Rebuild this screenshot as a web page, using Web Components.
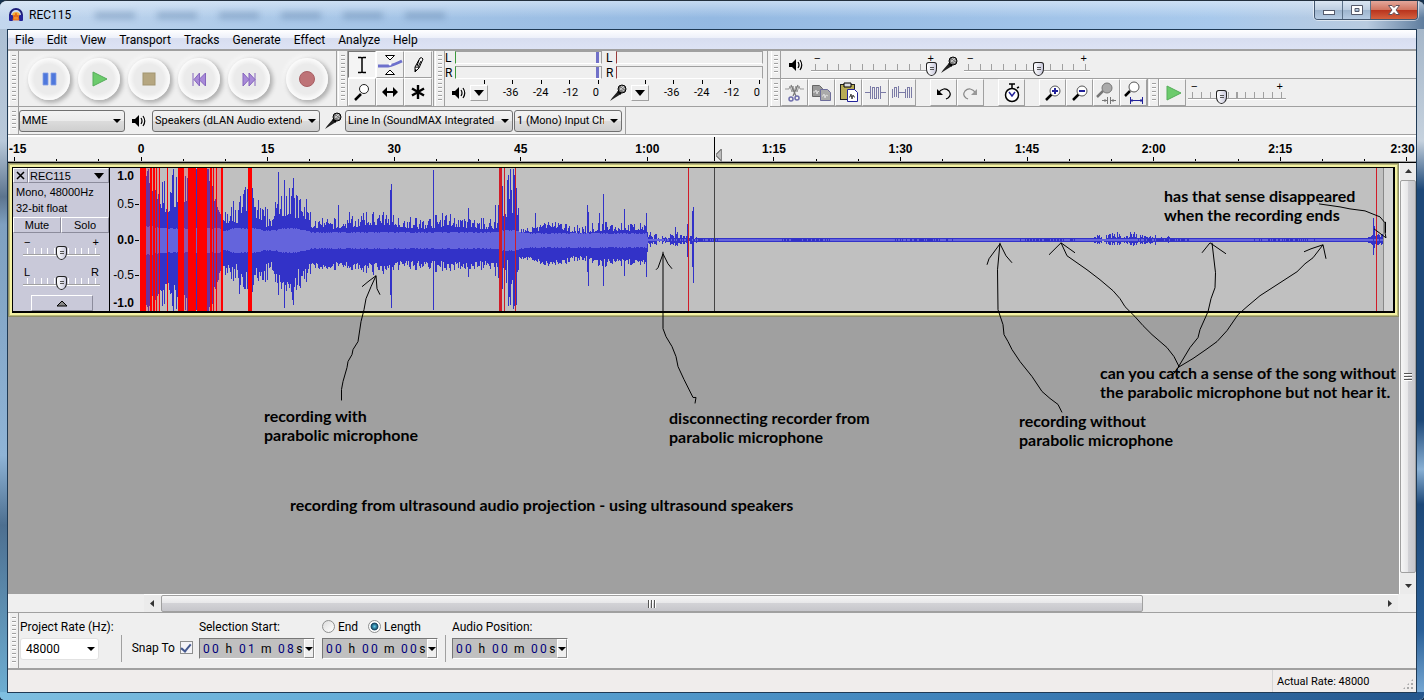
<!DOCTYPE html>
<html lang="en">
<head>
<meta charset="utf-8">
<title>REC115</title>
<style>
  html, body { margin: 0; height: 100%; }
  body { background: #16324f; font: 12px/16px Roboto, "Open Sans", sans-serif; color: #000; overflow: hidden; }
</style>
</head>
<body>
<app-window></app-window>

<script>
// every element renders its own markup into an open shadow root
class UiElement extends HTMLElement {
  connectedCallback() {
    if (this.shadowRoot) return;
    this.attachShadow({ mode: 'open' });
    this.shadowRoot.innerHTML = `<style>*{box-sizing:border-box}:host{box-sizing:border-box}</style>` + this.render();
  }
  attr(name, fallback = '') { return this.getAttribute(name) ?? fallback; }
}

const MIC = `<path d="M1 17L3 14 9 7 12 10 4 15Z" fill="#222"/><path d="M9 7L12 10" stroke="#000" stroke-width="2"/><circle cx="13" cy="5" r="4" fill="#777" stroke="#000"/><path d="M11 4l4 3M12 2l4 3M11 6l4-4" stroke="#ddd" stroke-width=".8"/>`;
const ICONS = {
  pause: [18, 18, `<path d="M3 3h5v12H3zM11 3h5v12h-5z" fill="#4f78dc" stroke="#86a0e4" stroke-width=".8"/>`],
  play: [18, 18, `<path d="M3 2L17 9 3 16Z" fill="#6ccb6c" stroke="#55ad5a"/>`],
  stop: [18, 18, `<rect x="3" y="3" width="12" height="12" fill="#b5a680" stroke="#a29570"/>`],
  start: [18, 18, `<path d="M3 3v13M9.500 3v13L4 9.500ZM15.500 3v13L9 9.500Z" fill="#a88ad8" stroke="#8565bd"/>`],
  end: [18, 18, `<path d="M15 3v13M3 3v13L9 9.500ZM9 3v13L15 9.500Z" fill="#a88ad8" stroke="#8565bd"/>`],
  record: [18, 18, `<circle cx="9" cy="9" r="7.500" fill="#be7377" stroke="#a75e63"/>`],
  ibeam: [20, 20, `<path d="M6 2.500h3q1 0 1 1 0-1 1-1h3M10 3v14M6 17.500h3q1 0 1-1 0 1 1 1h3" fill="none" stroke="#000" stroke-width="1.500"/>`],
  envelope: [26, 26, `<path d="M1 14h10q6-1 14-5" fill="none" stroke="#6d70cc" stroke-width="3"/><path d="M8.500 3.500h9L13 8ZM8.500 22.500h9L13 18Z" fill="#fff" stroke="#000"/><circle cx="13" cy="12" r="1.500" fill="#fff"/>`],
  pencil: [20, 20, `<path d="M7 17l0-5 5-9q2-1 3 1l-4 9ZM7 12q3 0 4 1M11 5l-2 6M13 6l-3 6" fill="#fff" stroke="#000"/><path d="M7 17v-3l2 1z"/>`],
  zoom: [20, 20, `<path d="M3 18l6-6" stroke="#000" stroke-width="2.500"/><circle cx="12" cy="7" r="4.500" fill="#fff" stroke="#222"/>`],
  shift: [20, 20, `<path d="M3 10h14" stroke="#000" stroke-width="2"/><path d="M7 5L2 10l5 5zM13 5l5 5-5 5z"/>`],
  multi: [20, 20, `<path d="M10 3v14M4 6.500l12 7M4 13.500l12-7" stroke="#000" stroke-width="2.400"/>`],
  speaker: [16, 16, `<path d="M1 6h3l4-4v12l-4-4H1z"/><path d="M10 5q2 3 0 6M12 3q3.500 5 0 10" fill="none" stroke="#000" stroke-width="1.200"/>`],
  mic: [18, 18, MIC],
  cut: [23, 23, `<path d="M2 8h4l1-3 2 6 1-6 1 6 2-6 1 6 2-6 1 3h4" fill="none" stroke="#999"/><path d="M8 4l5 11M15 4L10 15" stroke="#777" stroke-width="1.200"/><circle cx="8" cy="18" r="2" fill="none" stroke="#6d6dab" stroke-width="1.500"/><circle cx="14" cy="17" r="2" fill="none" stroke="#6d6dab" stroke-width="1.500"/>`],
  copy: [23, 23, `<path d="M2.500 4.500h7l3 3v8h-10z" fill="#999" stroke="#666"/><path d="M10.500 8.500h7l3 3v8h-10z" fill="#aaa" stroke="#6d6d9b"/><path d="M3 11h2l1-2 1 4 1-3 1 1M12 15h1l1-2 1 4 1-3 2 1" fill="none" stroke="#ddd"/>`],
  paste: [23, 23, `<rect x="3.500" y="3.500" width="14" height="15" fill="#b8ac55" stroke="#222"/><path d="M7 2h7v4H7z" fill="#ddd" stroke="#000"/><path d="M10.500 8.500h7l3 3v9h-10z" fill="#fff" stroke="#22229a"/><path d="M12 16h1l1-3 1 5 1-4 1 2h1" fill="none" stroke="#444"/>`],
  trim: [23, 23, `<path d="M1 11.500h5M6.500 5v13M8.500 18V6M10.500 6v12M12.500 18V6M14.500 6v12M16.500 5v13M17 11.500h5M8 6.500h3M10 17.500h3M12 6.500h3" fill="none" stroke="#7b7ba6"/>`],
  silence: [23, 23, `<path d="M1.500 17V8M3.500 6v10M5.500 16V6M7.500 5v12M8 11.500h6M14.500 17V8M16.500 6v11M18.500 17V6M20.500 6v11M3 6.500h3M16 6.500h3" fill="none" stroke="#7b7ba6"/>`],
  undo: [21, 21, `<path d="M5 11q6-7 11-2 3 4-1 7l-2 1" fill="none" stroke="#000" stroke-width="1.200"/><path d="M4 7v6h6z"/>`],
  redo: [21, 21, `<path d="M16 11q-6-7-11-2-3 4 1 7l2 1" fill="none" stroke="#888" stroke-width="1.200"/><path d="M17 7v6h-6z" fill="#999"/>`],
  timer: [20, 22, `<circle cx="10" cy="13" r="6.500" fill="#fff" stroke="#000" stroke-width="1.500"/><path d="M10 6V2M7 2h6M15 6l2-1" stroke="#000" stroke-width="1.500"/><path d="M7 10l3 4 3-4" fill="none" stroke="#22229a" stroke-width="1.500"/>`],
  zoomin: [20, 20, `<path d="M3 17l6-6" stroke="#000" stroke-width="2.500"/><circle cx="12" cy="8" r="5" fill="#fff" stroke="#555"/><path d="M12 5v6M9 8h6" stroke="#22229a" stroke-width="2"/>`],
  zoomout: [20, 20, `<path d="M3 17l6-6" stroke="#000" stroke-width="2.500"/><circle cx="12" cy="8" r="5" fill="#fff" stroke="#555"/><path d="M9 8h6" stroke="#22229a" stroke-width="2"/>`],
  fitsel: [23, 23, `<path d="M2 16l6-6" stroke="#777" stroke-width="2.500"/><circle cx="12" cy="7" r="5" fill="#aaa" stroke="#777"/><path d="M7 19.500h5M16 19.500h5M12.500 16v7M15.500 16v7M10 18v3M18 18v3" stroke="#777"/>`],
  fitproj: [23, 23, `<path d="M3 15l5-5" stroke="#000" stroke-width="2.500"/><circle cx="12" cy="6" r="5" fill="#fff" stroke="#555"/><path d="M8 19.500h12M8.500 16v7M20.500 16v7M10 18v3M19 18v3" stroke="#22229a"/>`],
  audacity: [16, 16, `<path d="M2 11V8a6 6 0 0 1 12 0v3" fill="none" stroke="#1d1d7a" stroke-width="2"/><path d="M4 13V9a4 4 0 0 1 8 0v4z" fill="#f7b23a"/><rect x="1" y="8" width="4" height="6" rx="1" fill="#24249a"/><rect x="11" y="8" width="4" height="6" rx="1" fill="#24249a"/><path d="M5 13l1-5 1 2 1-4 1 4 1-2 1 5z" fill="#f3902a" stroke="#e05a1a" stroke-width=".8"/>`],
  down: [12, 12, `<path d="M1 3h10L6 9z"/>`],
  smalldown: [8, 8, `<path d="M0 2h8L4 6z"/>`],
  up: [12, 12, `<path d="M1 9h10L6 4z" fill="#888" stroke="#000"/>`],
};

class UiIcon extends UiElement {
  render() {
    const [w, h, art] = ICONS[this.attr('name')];
    return `<style>:host{display:block;flex:none;line-height:0}</style>
      <svg width="${w}" height="${h}" viewBox="0 0 ${w} ${h}" aria-hidden="true">${art}</svg>`;
  }
}
customElements.define('ui-icon', UiIcon);

// dockable bar: a grip on the left and slotted controls
class ToolBar extends UiElement {
  render() {
    return `<style>
      :host{display:flex;border-right:1px solid #a0a0a0;border-bottom:1px solid #a0a0a0;background:#efefef}
      .grip{flex:none;width:10px;margin-left:1px;border-left:1px solid #fff;border-right:1px solid #a0a0a0;padding:4px 2px}
      .grip i{display:block;height:100%;background:repeating-linear-gradient(#a0a0a0 0 1px,#fff 1px 2px,#efefef 2px 4px)}
      .body{display:flex;align-items:center;flex:1;min-width:0}
    </style><div class="grip"><i></i></div><div class="body"><slot></slot></div>`;
  }
}
customElements.define('tool-bar', ToolBar);

class RoundButton extends UiElement {
  render() {
    return `<style>
      :host{display:block}
      button{display:grid;place-items:center;width:42px;height:42px;padding:0;border:0;border-radius:50%;
        background:radial-gradient(circle,#ebebeb 50%,#fafafa 68%);
        box-shadow:2px 2px 4px 1px #b0b0b0,-2px -2px 4px #fafafa}
    </style><button aria-label="${this.attr('icon')}"><ui-icon name="${this.attr('icon')}"></ui-icon></button>`;
  }
}
customElements.define('round-button', RoundButton);

class ToolButton extends UiElement {
  render() {
    return `<style>
      :host{display:block;width:27px;height:27px}
      button{display:grid;place-items:center;width:100%;height:100%;padding:0;background:#efefef;
        border:1px solid;border-color:#fff #a0a0a0 #a0a0a0 #fff;overflow:hidden}
      :host([pressed]) button{border-color:#777 #fff #fff #777;background:#f4f4f4}
    </style><button aria-label="${this.attr('icon')}"><ui-icon name="${this.attr('icon')}"></ui-icon></button>`;
  }
}
customElements.define('tool-button', ToolButton);

class TickSlider extends UiElement {
  render() {
    return `<style>
      :host{display:block;--tick:#a0a0a0}
      .ends{display:flex;justify-content:space-between;height:8px;padding:0 3px;font:11px/8px "Liberation Sans",sans-serif}
      :host([tall]) .ends{padding:0 1px}
      .scale{height:6px;margin:0 4px;border-right:1px solid var(--tick);
        background:repeating-linear-gradient(to right,var(--tick) 0 1px,transparent 1px 10%)}
      .rail{height:2px;background:#a0a0a0;border-bottom:1px solid #fff}
      .track{display:grid}
      .track > *{grid-area:1/1}
      .track > div{padding-top:2px}
      input{appearance:none;width:100%;height:14px;margin:0;background:none}
      input::-webkit-slider-thumb{appearance:none;width:11px;height:14px;border:1px solid #222;
        border-radius:3px 3px 6px 6px/3px 3px 8px 8px;
        background:linear-gradient(#555,#555) 3px 4px/4px 1px no-repeat,linear-gradient(#555,#555) 3px 6px/4px 1px no-repeat,
        linear-gradient(90deg,#fff,#c9c9dc)}
      :host([light]){--tick:#fff}
    </style>
    <div class="ends"><span>${this.attr('lo', '−')}</span><span>${this.attr('hi', '+')}</span></div>
    <div class="track"><div><div class="scale"></div><div class="rail"></div></div>
    <input type="range" min="0" max="100" value="${this.attr('value')}" aria-label="${this.attr('label')}"></div>`;
  }
}
customElements.define('tick-slider', TickSlider);

class DropDown extends UiElement {
  render() {
    return `<style>
      :host{display:grid;height:22px;align-items:center;font-size:11px}
      select,ui-icon{grid-area:1/1}
      select{appearance:none;width:100%;height:100%;padding:0 17px 0 2px;border:1px solid #707070;border-radius:3px;
        font:inherit;color:#000;background:linear-gradient(#f3f3f3,#ebebeb 50%,#dcdcdc 50%,#cfcfcf)}
      :host([plain]){font-size:12px}
      :host([plain]) select{border-color:#e2e2e2;background:#fff;padding-left:5px}
      ui-icon{justify-self:end;margin-right:4px;pointer-events:none}
    </style>
    <select aria-label="${this.attr('label')}"><option>${this.attr('value')}</option></select>
    <ui-icon name="smalldown"></ui-icon>`;
  }
}
customElements.define('drop-down', DropDown);

class DbMeter extends UiElement {
  render() {
    const bar = `<div class="bar"><i></i></div>`;
    return `<style>
      :host{display:block;align-self:flex-start;width:161px;font:12px/14px Roboto,sans-serif}
      .rows{display:grid;grid-template-columns:10px 1fr;row-gap:1px;padding-right:4px}
      .bar{height:13px;border-top:1px solid #a0a0a0;border-bottom:1px solid #fff;border-left:1px solid var(--edge);border-right:1px solid #a0a0a0;padding-right:2px}
      .bar i{display:block;height:100%;border-right:3px solid var(--peak,transparent)}
      .ticks{display:flex;padding:0 7px 0 11px}
      .ticks i{flex:1;height:4px;border-right:1px solid #000}
      .low{display:flex;align-items:center;padding:0 7px 0 6px;height:18px}
      button{display:grid;place-items:center;width:18px;height:16px;margin:0 15px 0 3px;padding:0;background:#efefef;border:1px solid;border-color:#fff #a0a0a0 #a0a0a0 #fff}
      .db{display:flex;flex:1;justify-content:space-between;font-size:11px}
      :host([kind=mic]) .low{padding-left:3px}
      :host([kind=mic]) button{margin-left:4px}
    </style>
    <div class="rows"><span>L</span>${bar}<span>R</span>${bar}</div>
    <div class="ticks"><i></i><i></i><i></i><i></i><i></i></div>
    <div class="low"><ui-icon name="${this.attr('kind')}"></ui-icon>
      <button aria-label="Meter options"><ui-icon name="down"></ui-icon></button>
      <div class="db"><span>-36</span><span>-24</span><span>-12</span><span>0</span></div></div>`;
  }
}
customElements.define('db-meter', DbMeter);

class TimeField extends UiElement {
  render() {
    const digits = (s) => [...s].map((d) => `<b>${d}</b>`).join('');
    const [h, m, s] = this.attr('value').split(':');
    return `<style>
      :host{display:flex;width:116px;height:21px;background:#c0c0c0;border:1px solid;border-color:#777 #fff #fff #777;padding-left:2px;align-items:center}
      .t{display:flex;flex:1}
      b{width:9px;text-align:center;font-weight:400;color:#00007c}
      u{text-decoration:none;text-align:center;width:18px}
      u.m{width:21px}
      u.s{width:9px}
      button{width:10px;height:19px;padding:0;background:#efefef;border:1px solid;border-color:#fff #888 #888 #fff;display:grid;place-items:center}
    </style>
    <div class="t" role="group" aria-label="${this.attr('label')}">${digits(h)}<u>h</u>${digits(m)}<u class="m">m</u>${digits(s)}<u class="s">s</u></div>
    <button aria-label="Format"><ui-icon name="smalldown"></ui-icon></button>`;
  }
}
customElements.define('time-field', TimeField);

class TitleBar extends UiElement {
  render() {
    return `<style>
      :host{display:flex;height:28px;align-items:center;padding-left:8px;
        background:linear-gradient(#e6f0fb99,#ffffff00 60%),linear-gradient(90deg,#c3d7ee,#aac8e8 20%,#94b9e2 50%,#a8c9ec 85%,#b9cbe0 96%,#5f7d9e)}
      h1{font:12px/16px Roboto,sans-serif;margin:0 0 0 5px}
      .ghost{display:flex;gap:22px;margin-left:24px;filter:blur(3px)}
      .ghost i{width:40px;height:7px;background:#5d7fa66b}
      .controls{display:flex;align-self:flex-start;margin-left:auto;margin-right:6px;border:1px solid #42566e;border-top:0;border-radius:0 0 4px 4px;overflow:hidden;box-shadow:0 0 0 1px #ffffff88}
      button{display:grid;place-items:center;width:28px;height:18px;padding:0;border:0;border-right:1px solid #5c7188;background:linear-gradient(#dbe6f2,#bccde0 50%,#9db4cd 50%,#b6cbe2)}
      button.x{width:46px;border-right:0;background:linear-gradient(#e3a79b,#d0745f 50%,#b8321c 50%,#d4613f)}
    </style>
    <ui-icon name="audacity"></ui-icon><h1>REC115</h1>
    <div class="ghost"><i></i><i></i><i></i><i></i><i></i><i></i></div>
    <div class="controls">
      <button aria-label="Minimize"><svg width="14" height="12"><rect x="1.500" y="6.500" width="11" height="4" fill="#fff" stroke="#555a6b"/></svg></button>
      <button aria-label="Maximize"><svg width="14" height="12"><path d="M1.500 1.500h11v9h-11zM5 4.500v3h4v-3z" fill="#fff" fill-rule="evenodd" stroke="#555a6b"/></svg></button>
      <button class="x" aria-label="Close"><svg width="14" height="12"><path d="M1.500 1.500h3.500l2 2 2-2h3.500L9 6l3.500 4.500H9l-2-2-2 2H1.500L5 6z" fill="#fff" stroke="#60505a"/></svg></button>
    </div>`;
  }
}
customElements.define('title-bar', TitleBar);

class MenuBar extends UiElement {
  render() {
    const items = ['File', 'Edit', 'View', 'Transport', 'Tracks', 'Generate', 'Effect', 'Analyze', 'Help'];
    return `<style>
      :host{display:flex;gap:13px;height:20px;align-items:center;padding-left:7px;border-bottom:1px solid #a0a0a0;
        background:linear-gradient(#fff,#eef1fa 40%,#d8def0 45%,#dde3f4)}
      button{all:unset;font:12px/16px Roboto,"Open Sans",sans-serif}
    </style>${items.map((t) => `<button>${t}</button>`).join('')}`;
  }
}
customElements.define('menu-bar', MenuBar);

class TimeRuler extends UiElement {
  render() {
    // 15 s is 8.99% of the width, zero sits at 9.45%
    const at = (sec) => (9.45 + sec / 15 * 8.99).toFixed(3) + '%';
    const names = ['-15', '0', '15', '30', '45', '1:00', '1:15', '1:30', '1:45', '2:00', '2:15', '2:30'];
    let out = '';
    names.forEach((n, i) => {
      const sec = (i - 1) * 15;
      const first = i === 0, last = i === names.length - 1;
      out += `<text x="${first ? 1 : last ? '99.900%' : at(sec)}" y="16" text-anchor="${first ? 'start' : last ? 'end' : 'middle'}">${n}</text>`;
      out += `<line x1="${at(sec)}" x2="${at(sec)}" y1="20" y2="24"/>`;
      if (!last) for (const m of [5, 10]) out += `<line x1="${at(sec + m)}" x2="${at(sec + m)}" y1="22" y2="24"/>`;
    });
    return `<style>
      :host{display:block;height:28px;background:#efefef;border-top:2px solid #fff;border-bottom:1px solid #000;box-shadow:inset 0 -1px #a0a0a0}
      svg{display:block;width:100%;height:25px;shape-rendering:crispEdges}
      text{font:bold 12px "Liberation Sans",sans-serif}
      line{stroke:#000}
    </style><svg>${out}<line x1="50.200%" x2="50.200%" y1="0" y2="24"/>
      <svg x="50.200%" y="12" width="8" height="13"><path d="M6.500 0v12L1 6z" fill="#bbb" stroke="#888"/></svg></svg>`;
  }
}
customElements.define('time-ruler', TimeRuler);

class TrackPanel extends UiElement {
  render() {
    return `<style>
      :host{display:flex;flex-direction:column;width:97px;background:#c9c9d9;border-right:1px solid #000;font:11px/16px "Liberation Sans",sans-serif}
      .row{display:flex}
      button{display:flex;align-items:center;justify-content:center;height:15px;padding:0;font:inherit;background:#c9c9d9;border:1px solid;border-color:#fff #8c8c9c #8c8c9c #fff}
      .x{width:15px}
      .name{flex:1;justify-content:space-between;padding:0 3px 0 1px}
      .info{padding:1px 3px}
      .half{flex:1;height:16px}
      .sliders{display:flex;flex-direction:column;gap:8px;padding:5px 9px 5px 10px}
      .fold{width:62px;height:17px;margin:0 0 0 18px}
    </style>
    <div class="row"><button class="x" aria-label="Close track"><svg width="9" height="9"><path d="M1 1l7 7M8 1L1 8" stroke="#000" stroke-width="1.500"/></svg></button>
      <button class="name"><span>REC115</span><ui-icon name="down"></ui-icon></button></div>
    <div class="info">Mono, 48000Hz<br>32-bit float</div>
    <div class="row"><button class="half">Mute</button><button class="half">Solo</button></div>
    <div class="sliders">
      <tick-slider tall light value="50" label="Gain"></tick-slider>
      <tick-slider tall light value="50" lo="L" hi="R" label="Pan"></tick-slider>
    </div>
    <button class="fold" aria-label="Collapse"><ui-icon name="up"></ui-icon></button>`;
  }
}
customElements.define('track-panel', TrackPanel);

class WaveForm extends UiElement {
  render() {
    return `<style>
      :host{display:block;flex:1;min-width:0;background:#c0c0c0}
      svg{display:block;width:100%;height:100%;shape-rendering:crispEdges}
    </style><svg viewBox="140 168 1253 143" preserveAspectRatio="none">${this.wave()}</svg>`;
  }
  wave() {
    // x, height above the axis, height below the axis, jitter, rms
    const env = [
      [140, 60, 60, 14, 14], [156, 46, 58, 30, 13], [164, 32, 46, 24, 12], [178, 46, 58, 34, 12], [210, 52, 60, 24, 12],
      [219, 32, 38, 16, 12], [225, 17, 26, 10, 9], [235, 20, 28, 18, 12], [244, 30, 38, 22, 12], [254, 28, 34, 20, 12],
      [263, 16, 28, 14, 10], [276, 20, 28, 16, 10], [279, 34, 46, 30, 12], [290, 32, 44, 30, 12], [300, 25, 34, 18, 11],
      [309, 24, 28, 14, 9], [311, 14, 25, 6, 8], [340, 13, 24, 7, 8], [375, 18, 26, 9, 8], [420, 13, 23, 8, 8], [450, 17, 25, 9, 8],
      [460, 14, 24, 6, 8], [497, 13, 23, 8, 8], [501, 36, 44, 44, 10], [515, 36, 46, 40, 10], [519, 9, 18, 4, 8],
      [532, 8, 17, 4, 7], [545, 14, 23, 5, 7], [580, 8, 17, 5, 7], [600, 11, 21, 6, 7], [646, 11, 21, 5, 7],
      [648, 2, 2, 3, 1], [668, 2, 2, 3, 1], [676, 3, 3, 4, 2], [694, 2, 2, 2, 1], [698, 2, 2, 0, 1],
      [1088, 2, 2, 0, 1], [1100, 2, 2, 3, 1], [1135, 3, 3, 3, 2], [1160, 2, 2, 1, 1], [1180, 2, 2, 0, 1], [1366, 2, 2, 0, 1],
      [1374, 5, 5, 3, 2], [1383, 3, 3, 3, 1],
    ];
    const spikes = {
      167: [72, 70], 172: [65, 66], 196: [72, 70], 208: [71, 71], 278: [68, 55], 284: [60, 68], 289: [52, 48], 239: [38, 54], 338: [35, 26],
      349: [28, 28], 373: [28, 35], 390: [50, 55], 391: [56, 68], 433: [70, 70], 468: [32, 37], 495: [35, 36], 498: [35, 38],
      507: [60, 20], 508: [65, 66], 511: [50, 44], 516: [52, 65], 518: [32, 30], 535: [27, 20], 587: [35, 32], 588: [28, 46],
      603: [46, 46], 599: [27, 25], 624: [31, 36], 646: [27, 37], 650: [8, 7], 656: [6, 5], 675: [13, 6], 677: [8, 6],
      687: [16, 17], 692: [29, 27], 693: [33, 43], 1112: [7, 5], 1117: [8, 5], 1130: [8, 5], 1134: [8, 5], 1155: [5, 5],
      1168: [4, 3], 1373: [22, 15], 1374: [14, 8],
    };
    const axis = 240;
    let seed = 7, k = 0, outer = '', inner = '';
    const rnd = () => (seed = (seed * 16807) % 2147483647) / 2147483647;
    for (let x = 140; x < 1383; x++) {
      while (k < env.length - 2 && x >= env[k + 1][0]) k++;
      const a = env[k], b = env[k + 1], t = (x - a[0]) / (b[0] - a[0]);
      const mix = (i) => a[i] + (b[i] - a[i]) * t;
      // squared noise keeps most columns low with an occasional peak
      const n = rnd(), j = mix(3) * (n * n * 1.6 - .3);
      let up = mix(1) + j, dn = mix(2) + j * .7 + (rnd() - .5) * mix(3) * .4;
      if (spikes[x]) [up, dn] = spikes[x];
      up = Math.max(1, Math.min(71, Math.round(up)));
      dn = Math.max(1, Math.min(71, Math.round(dn)));
      outer += `M${x}.500 ${axis - up}V${axis + dn}`;
      const r = Math.round(mix(4) + (mix(4) > 5 ? rnd() * 1.500 : 0));
      if (mix(4) > 3) inner += `M${x}.500 ${axis - r + 1}V${axis + r}`;
      else if (Math.sin(x / 19) + rnd() * 1.400 > .1) inner += `M${x}.500 ${axis - 1}V${axis + 1}`;
    }
    const clips = [[140, 6], [150, 2], [153, 2], [156, 1], [159, 1], [167, 1], [178, 6], [188, 8], [197, 10], [210, 2], [213, 1],
      [216, 1], [221, 2], [248, 4]];
    const dark = [[499, 3], [504, 1], [515, 1], [688, 1], [1376, 1]];
    return `<path d="M1384 168h9v143h-9z" fill="#d6d6d6"/>
      <path d="${outer}" stroke="#3232c8"/><path d="${inner}" stroke="#6464dc"/>
      <path d="M146 168h14v143h-14zM206 168h16v143h-16zM184 168h4v143h-4z" fill="#f33" opacity=".28"/>
      ${clips.map(([x, w]) => `<rect x="${x}" y="168" width="${w}" height="143" fill="#f00"/>`).join('')}
      ${dark.map(([x, w]) => `<rect x="${x}" y="168" width="${w}" height="143" fill="#d01c28"/>`).join('')}
      <path d="M714.500 168v143" stroke="#444"/><path d="M1383.500 168v143" stroke="#888"/>`;
  }
}
customElements.define('wave-form', WaveForm);

class AudioTrack extends UiElement {
  render() {
    return `<style>
      :host{display:flex;height:146px;margin:4px 4px 0 4px;border:1px solid #000;border-width:1px 2px 2px 1px;box-shadow:0 0 0 2px #f4f2a4,0 0 0 3px #b9b878,0 0 0 4px #8e8d68}
      .levels{display:flex;flex-direction:column;align-items:flex-end;width:30px;padding:1px 6px 0 0;background:#cdcddc;font:12px/14px "Liberation Sans",sans-serif}
      .levels span{position:relative}
      .levels span::after{content:"";position:absolute;left:100%;top:7px;width:4px;height:1px;margin-left:1px;background:#000}
      .near{margin:14px 0 22px}
      .far{margin:21px 0 14px}
    </style>
    <track-panel></track-panel>
    <div class="levels"><b>1.0</b><span class="near">0.5</span><span><b>0.0</b></span><span class="far">-0.5</span><b>-1.0</b></div>
    <wave-form></wave-form>`;
  }
}
customElements.define('audio-track', AudioTrack);

// hand-drawn arrows and captions that float over the track canvas
class HandNotes extends UiElement {
  render() {
    return `<style>
      :host{position:absolute;inset:0;pointer-events:none;font:bold 16px/19px Lato,"Open Sans",sans-serif;font-variant-ligatures:none}
      svg{position:absolute;width:100%;height:100%}
      path{fill:none;stroke:#000;stroke-width:1;vector-effect:non-scaling-stroke}
      p{position:absolute;margin:0;white-space:nowrap}
    </style>
    <svg viewBox="8 163 1391 432" preserveAspectRatio="none">
      <path d="M341.500 401V390L343 382 347 368 348 362 352 355 353 350 358 342 361 322 364 310 366 299 371 287 376 276M362 287L368 282 376 276 377 289 380 295"/>
      <path d="M695 404L696 398 693 398 684 380 678 367 676 357 672 347 666 337 663 329V252M656 270L658 268 663 254 668 264 672 269"/>
      <path d="M1062 413L1058 405 1050 399 1042 392 1032 377 1020 362 1012 350 1008 342 1004 335 1003 325 998 310 997.500 270 1000 243M987 265L989 259 1000 244 1006 256 1012 263"/>
      <path d="M1173 375L1179 367 1174 357 1167 348 1152 335 1143 326 1135 317 1125 307 1120 299 1113 291 1100 280 1087 270 1067 256 1061 243M1049 255L1061 243 1075 253"/>
      <path d="M1178 368L1190 348 1198 338 1200 330 1208 312 1211 299 1215 288 1215.500 273 1212 243M1202 253L1210 243 1226 254"/>
      <path d="M1178 368L1193 359 1206 350 1217 342 1227 331 1238 315 1247 307 1260 296 1277 285 1297 272 1305 264 1313 258 1323 245M1304 252L1311 249 1323 245 1326 259M1173 372L1180 373"/>
      <path d="M1319 204L1340 207 1350 209 1365 211 1380 217 1385 223V233L1386 238 1374 229M1385.500 222V233"/>
    </svg>
    <p style="left:256px;top:243px">recording with<br>parabolic microphone</p>
    <p style="left:661px;top:245px">disconnecting recorder from<br>parabolic microphone</p>
    <p style="left:1011px;top:248px">recording without<br>parabolic microphone</p>
    <p style="left:1092px;top:200px">can you catch a sense of the song without<br>the parabolic microphone but not hear it.</p>
    <p style="left:1156px;top:23px">has that sense disappeared<br>when the recording ends</p>
    <p style="left:282px;top:332px">recording from ultrasound audio projection - using ultrasound speakers</p>`;
  }
}
customElements.define('hand-notes', HandNotes);

class ScrollBar extends UiElement {
  render() {
    const v = this.hasAttribute('vertical');
    return `<style>
      :host{display:flex;flex-direction:${v ? 'column' : 'row'};background:#ebebeb;border:solid #fff;border-width:${v ? '0 0 0 1px' : '1px 0 0'}}
      svg{flex:none}
      .thumb{flex:${this.attr('size')};display:grid;place-items:center;border:1px solid #a0a0a0;border-radius:2px;background:linear-gradient(${v ? '90deg' : '180deg'},#f6f6f6,#e6e6e8 50%,#d2d2d6 50%,#c6c6cb)}
      .thumb i{width:8px;height:8px;background:repeating-linear-gradient(${v ? '180deg' : '90deg'},#555 0 1px,#fff 1px 2px,transparent 2px 3px)}
      .rest{flex:${this.attr('rest')}}
    </style>
    <svg width="17" height="17"><path d="${v ? 'M5 10h7L8.500 6z' : 'M10 5v7L6 8.500z'}" fill="#333"/></svg>
    <div class="thumb"><i></i></div><div class="rest"></div>
    <svg width="17" height="17"><path d="${v ? 'M5 7h7L8.500 11z' : 'M7 5v7l4-3.500z'}" fill="#333"/></svg>`;
  }
}
customElements.define('scroll-bar', ScrollBar);

class SelectionBar extends UiElement {
  render() {
    return `<style>
      :host{display:block;border-top:1px solid #a0a0a0;font:12px/16px Roboto,sans-serif}
      tool-bar{height:57px;border-right:0;border-bottom:2px solid #a0a0a0}
      .col{display:flex;flex-direction:column;gap:3px;align-self:flex-start;padding-top:5px}
      .rate{padding:5px 15px 0 1px}
      .length{margin-left:7px}
      .line{display:flex;align-items:center;height:17px}
      hr{width:1px;height:27px;margin:22px 6px 0 7px;border:0;background:#a0a0a0;align-self:flex-start}
      .rate + hr{margin-left:-8px}
      .snap{display:flex;align-items:center;align-self:flex-start;margin:26px 6px 0 4px;height:17px}
      input{width:13px;height:13px;margin:0 3px 0 0;appearance:none;border:1px solid #8e8f8f;background:linear-gradient(135deg,#ddd,#fff)}
      .snap input{margin:0 0 0 5px;background:#f4f4f8;display:grid;place-items:center}
      .snap input:checked::before{content:"";width:4px;height:8px;margin-top:-2px;border:solid #43588f;border-width:0 2px 2px 0;transform:rotate(40deg)}
      input[type=radio]{border-radius:50%}
      input[type=radio]:checked{background:radial-gradient(circle,#5fd0ee,#12405e 45%,#fff 55%)}
      .line label + input{margin-left:10px}
      drop-down{width:79px}
    </style>
    <tool-bar>
      <div class="col rate"><label class="line" for="rate">Project Rate (Hz):</label><drop-down id="rate" plain label="Project Rate (Hz)" value="48000"></drop-down></div>
      <hr>
      <div class="snap"><label for="snap">Snap To</label><input id="snap" type="checkbox" checked></div>
      <div class="col"><div class="line">Selection Start:</div><time-field value="00:01:08" label="Selection start"></time-field></div>
      <div class="col length"><div class="line"><input id="end" type="radio" name="mode"><label for="end">End</label>
        <input id="len" type="radio" name="mode" checked><label for="len">Length</label></div><time-field value="00:00:00" label="Length"></time-field></div>
      <hr>
      <div class="col"><div class="line">Audio Position:</div><time-field value="00:00:00" label="Audio position"></time-field></div>
    </tool-bar>`;
  }
}
customElements.define('selection-bar', SelectionBar);

class AppWindow extends UiElement {
  render() {
    return `<style>
      :host{display:flex;flex-direction:column;height:100vh;border-radius:7px 7px 5px 5px;overflow:hidden;border-top:1px solid #23303e;
        background:linear-gradient(90deg,#7fbfe0,#5fa9d6 30%,#3c7fb8 70%,#24568c) bottom/100% 8px no-repeat,
        linear-gradient(#a9bdd2,#b9c9da 20%,#5c748e 28%,#7fa0c0 32%,#8fb4d6 65%,#4d6f90 75%,#6fb0d4) left/8px 100% no-repeat,
        linear-gradient(#9db0c4,#c6d2de 20%,#1d4878 27%,#1d4878 60%,#89b0d4 67%,#1d4878 72%,#2a6098 90%,#7fb0da) right/9px 100% no-repeat,#efefef}
      .client{flex:1;display:flex;flex-direction:column;min-height:0;margin:0 7px 7px;border:1px solid #1f3a55;background:#efefef}
      .docks{display:flex;border-top:1px solid #a0a0a0}
      .transport{width:329px;height:56px}
      .transport round-button{margin:0 8px 0 0}
      .transport round-button:first-of-type{margin-left:9px}
      .transport round-button:last-of-type{margin-left:8px;margin-right:0}
      .tools{width:97px}
      .grid{display:grid;grid-template-columns:repeat(3,28px);grid-template-rows:27px 28px}
      .grid tool-button{width:28px;height:auto}
      .meters{width:334px}
      .side{display:flex;flex-direction:column;flex:1;border-left:2px solid #efefef}
      .mixer{height:28px;border-right:0}
      .mixer ui-icon{margin:0 7px}
      .mixer ui-icon[name=mic]{margin:0 6px 0 3px}
      .mixer tick-slider{width:126px}
      .edits{display:flex;flex:1}
      .edit{width:378px}
      .speed{border-right:0;flex:1}
      .speed tick-slider{width:98px;margin-left:2px}
      .gap{width:14px}
      .devices{display:flex;height:28px;border-bottom:1px solid #a0a0a0}
      .devices tool-bar{border-bottom:0;width:618px;padding-right:2px}
      .devices drop-down{width:168px;margin-right:1px}
      .devices .host{width:106px}
      .devices .chan{width:108px}
      .devices ui-icon{margin:0 5px}
      .devices ui-icon[name=mic]{margin:0 3px}
      .main{flex:1;display:flex;min-height:0}
      .stage{position:relative;flex:1;min-width:0;background:#a0a0a0}
      .main scroll-bar{width:17px}
      .hs{height:18px;display:flex;padding-right:18px}
      .hs scroll-bar{flex:1;margin-left:136px}
      .status{display:flex;height:22px;background:#f0edec;font-size:11px;line-height:23px}
      .status span{margin-left:auto;width:130px;padding-left:4px;border-left:1px solid #d5d5d5}
      .status i{width:12px;height:12px;margin:8px 2px 0 0;background:radial-gradient(circle at 2px 2px,#aaa 1px,transparent 1px) 0 0/4px 4px;clip-path:polygon(100% 0,100% 100%,0 100%)}
    </style>
    <title-bar></title-bar>
    <div class="client">
      <menu-bar></menu-bar>
      <div class="docks">
        <tool-bar class="transport">${['pause', 'play', 'stop', 'start', 'end', 'record'].map((n) => `<round-button icon="${n}"></round-button>`).join('')}</tool-bar>
        <tool-bar class="tools"><div class="grid">
          <tool-button icon="ibeam" pressed></tool-button><tool-button icon="envelope"></tool-button><tool-button icon="pencil"></tool-button>
          <tool-button icon="zoom"></tool-button><tool-button icon="shift"></tool-button><tool-button icon="multi"></tool-button>
        </div></tool-bar>
        <tool-bar class="meters">
          <db-meter kind="speaker" style="--edge:#3c9a3c;--peak:#7070c8"></db-meter>
          <db-meter kind="mic" style="--edge:#9a3c3c"></db-meter>
        </tool-bar>
        <div class="side">
          <tool-bar class="mixer">
            <ui-icon name="speaker"></ui-icon><tick-slider value="100" label="Output volume"></tick-slider>
            <ui-icon name="mic"></ui-icon><tick-slider value="60" label="Input volume"></tick-slider>
          </tool-bar>
          <div class="edits">
            <tool-bar class="edit">
              ${['cut', 'copy', 'paste', 'trim', 'silence'].map((n) => `<tool-button icon="${n}"></tool-button>`).join('')}
              <div class="gap"></div><tool-button icon="undo"></tool-button><tool-button icon="redo"></tool-button>
              <div class="gap"></div><tool-button icon="timer"></tool-button><div class="gap"></div>
              ${['zoomin', 'zoomout', 'fitsel', 'fitproj'].map((n) => `<tool-button icon="${n}"></tool-button>`).join('')}
            </tool-bar>
            <tool-bar class="speed"><tool-button icon="play"></tool-button><tick-slider value="32" label="Playback speed"></tick-slider></tool-bar>
          </div>
        </div>
      </div>
      <div class="devices"><tool-bar>
        <drop-down class="host" label="Audio host" value="MME"></drop-down>
        <ui-icon name="speaker"></ui-icon>
        <drop-down label="Output device" value="Speakers (dLAN Audio extended)"></drop-down>
        <ui-icon name="mic"></ui-icon>
        <drop-down label="Input device" value="Line In (SoundMAX Integrated"></drop-down>
        <drop-down class="chan" label="Input channels" value="1 (Mono) Input Channel"></drop-down>
      </tool-bar></div>
      <time-ruler></time-ruler>
      <div class="main">
        <div class="stage"><audio-track></audio-track><hand-notes></hand-notes></div>
        <scroll-bar vertical size="393" rest="4"></scroll-bar>
      </div>
      <div class="hs"><scroll-bar size="980" rest="238"></scroll-bar></div>
      <selection-bar></selection-bar>
      <div class="status"><span>Actual Rate: 48000</span><i></i></div>
    </div>`;
  }
}
customElements.define('app-window', AppWindow);
</script>
</body>
</html>
